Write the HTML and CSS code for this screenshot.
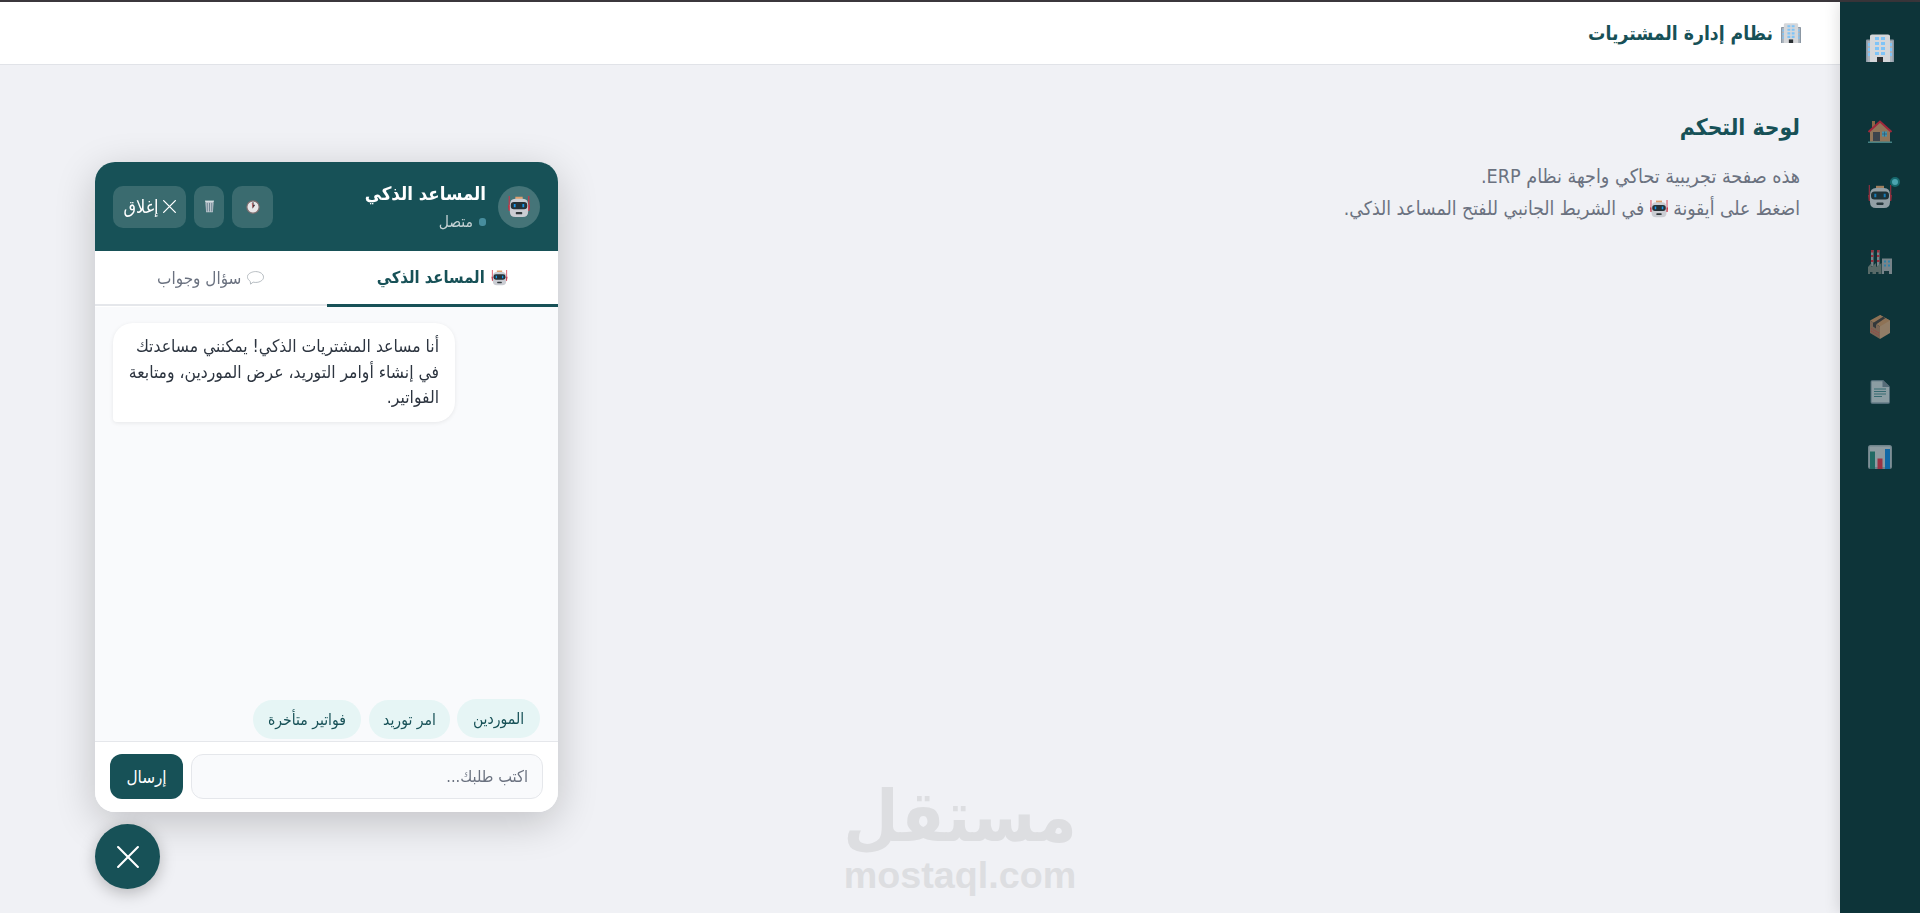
FILE: index.html
```html
<!DOCTYPE html>
<html lang="ar" dir="rtl">
	<head>
		<title>نظام إدارة المشتريات</title>
		<meta charset="utf-8" />
		<link rel="stylesheet" href="styles.css">
	</head>
<body>
	<svg class="sprite" width="0" height="0">
		<symbol id="building" viewBox="0 0 28 28">
			<path fill="#8b97a3" d="M0 28V6.500q0-1 1-1h26q1 0 1 1V28z"/>
			<path fill="#aab3bc" d="M1.500 7h25v21h-25z"/>
			<path fill="#d5d7da" d="M4 28V2q0-1.500 2-1.500h16q2 0 2 1.500v26z"/>
			<path fill="#7fc4f7" d="M9 3h4v3H9zm6 0h4v3h-4zM9 8h4v3H9zm6 0h4v3h-4zM9 13h4v3H9zm6 0h4v3h-4zM9 18h4v3H9zm6 0h4v3h-4zM2 9h2v3H2zm0 5h2v3H2zm0 5h2v3H2zM24 9h2v3h-2zm0 5h2v3h-2zm0 5h2v3h-2z"/>
			<path fill="#2b3033" d="M11 28v-5h6v5z"/>
		</symbol>
		<symbol id="house" viewBox="0 0 24 24">
			<path fill="#c07f50" d="M4 1h3v8H4z"/>
			<path fill="#ca9169" d="M2 11 12 2l10 9v11H2z"/>
			<path fill="none" stroke="#e0243c" stroke-width="2" d="M.5 12 12 1.500 23.500 12"/>
			<path fill="#514b56" d="M5 12h7v9H5z"/>
			<path fill="#53bbe5" d="M14 11.500h5v5h-5z"/>
			<path fill="none" stroke="#456579" stroke-width=".7" d="M16.500 11.500v5M14 14h5"/>
			<path fill="#5da2a4" d="M0 21.500h24V23H0z"/>
		</symbol>
		<symbol id="robot" viewBox="0 0 24 24">
			<path fill="#dfa06f" d="M8 .8h8V4H8z"/>
			<path stroke="#d72d43" stroke-width="1.100" d="M1.300 0v16M22.700 0v16"/>
			<path fill="#c62c3e" d="M0 10h3v6H1zM24 10h-3v6h2z"/>
			<path fill="#cbcdd3" d="M8 3h8q6 0 6 7v7q0 6-6 6H8q-6 0-6-6v-7q0-7 6-7z"/>
			<rect x="3" y="6.500" width="18" height="8" rx="3.500" fill="#263238"/>
			<path fill="#1998ec" d="M6.300 8.800h2v3.500h-2zm9.400 0h2v3.500h-2z"/>
			<rect x="8.500" y="17.500" width="7" height="2.500" rx=".7" fill="#30383c"/>
		</symbol>
		<symbol id="factory" viewBox="0 0 24 24">
			<path fill="#a4a7ad" d="M3 0h2.500v16H3zm6 0h2.500v16H9zM14 8.500h10V24H14z"/>
			<path fill="#d22e40" d="M3 0h2.500v2.500H3zm0 5h2.500v2H3zm0 5h2.500v2H3zM9 0h2.500v2.500H9zm0 5h2.500v2H9zm0 5h2.500v2H9z"/>
			<path fill="#78817d" d="M0 24v-7l3.500-4v4L8 13v4l5.500-4v11z"/>
			<path fill="#3ea4d7" d="M16 10.500h2v2h-2zm4 0h2v2h-2zm-4 4h2v2h-2zm4 0h2v2h-2z"/>
			<path fill="#17383c" d="M2 22h2.500v2H2zm6 0h2.500v2H8zm8-1h5v3h-5z"/>
		</symbol>
		<symbol id="box" viewBox="0 0 24 24">
			<path fill="#ca9d7b" d="M12 0 22 5.500v12.500L12 24z"/>
			<path fill="#c58d62" d="M2 5.500 12 0l10 5.500-10 6z"/>
			<path fill="#a77b61" d="m2 5.500 10 6V24L2 18z"/>
			<path fill="#443b3c" d="m5 8 10-6.300 2.500 1.400L8 9.500v4l-3-2z"/>
			<path stroke="#d94747" stroke-dasharray="1.500 1" d="M3 13.500 11 18M3 16l8 4.500"/>
		</symbol>
		<symbol id="page" viewBox="0 0 24 24">
			<path fill="#6f8494" d="M2.500 2q0-2 2-2H15l7 7v15q0 2-2 2H4.500q-2 0-2-2z"/>
			<path fill="#c1cad0" d="M3.500 1.200h11V7H21v15.500H3.500z"/>
			<path stroke="#48828a" stroke-width="1.200" d="M6 9h12M6 11.500h12M6 14h12M6 16.500h8"/>
			<path fill="#758594" d="M15 0v6.500h7z"/>
		</symbol>
		<symbol id="chart" viewBox="0 0 24 24">
			<rect width="24" height="24" rx="2.500" fill="#9aa6af"/>
			<path fill="#c5c9ce" d="M1.500 1.500h21V22h-21z"/>
			<path fill="#2b8277" d="M2 6.500h5V24H2z"/>
			<path fill="#d83349" d="M9.500 13.500h5V24h-5z"/>
			<path fill="#127fd5" d="M17 4h5v20h-5z"/>
		</symbol>
		<symbol id="clock" viewBox="0 0 16 16">
			<circle cx="8" cy="8" r="7" fill="#e7e6e8" stroke="#816f70" stroke-width="1.400"/>
			<path fill="none" stroke="#3c3337" stroke-width="1.300" d="M8 2.500V8l1.800-2.500"/>
			<path stroke="#d04e51" stroke-width=".8" d="M7 3.500 8 8.500"/>
		</symbol>
		<symbol id="trash" viewBox="0 0 10 14">
			<path fill="#bac5cc" d="M.5 1h9v2L8.800 13.500H1.200L.5 3z"/>
			<path stroke="#eaf0f3" d="M0 1h10"/>
			<path stroke="#4f6b7c" stroke-width=".8" d="M2.500 3v9.500M5 3v9.500M7.500 3v9.500"/>
		</symbol>
		<symbol id="bubble" viewBox="0 0 18 15">
			<path fill="#fff" stroke="#a9b0b6" stroke-width=".9" d="M3.500 11.200C-4 5 4 .7 9 .7s8.500 2.600 8.500 6-5 6.500-11 5.200L3.800 14z"/>
		</symbol>
		<symbol id="cross" viewBox="0 0 20 20">
			<path fill="none" stroke="currentColor" stroke-linecap="round" d="m1 1 18 18M19 1 1 19"/>
		</symbol>
	</svg>

	<div class="topline"></div>
	<div class="app">
		<nav class="sidebar">
			<svg class="logo"><use href="#building"/></svg>
			<a class="item"><svg><use href="#house"/></svg></a>
			<a class="item"><svg><use href="#robot"/></svg><span class="dot"></span></a>
			<a class="item"><svg><use href="#factory"/></svg></a>
			<a class="item"><svg><use href="#box"/></svg></a>
			<a class="item"><svg><use href="#page"/></svg></a>
			<a class="item"><svg><use href="#chart"/></svg></a>
		</nav>
		<main class="main">
			<header class="header">
				<svg><use href="#building"/></svg>
				<h1>نظام إدارة المشتريات</h1>
			</header>
			<section class="content">
				<h2>لوحة التحكم</h2>
				<p class="line1">هذه صفحة تجريبية تحاكي واجهة نظام ERP.</p>
				<p class="line2">اضغط على أيقونة <svg><use href="#robot"/></svg> في الشريط الجانبي للفتح المساعد الذكي.</p>
			</section>
		</main>
	</div>

	<div class="watermark">
		<div class="wm-ar">مستقل</div>
		<div class="wm-en">mostaql.com</div>
	</div>

	<div class="chat">
		<div class="chat-header">
			<div class="avatar"><svg><use href="#robot"/></svg></div>
			<div class="who">
				<div class="name">المساعد الذكي</div>
				<div class="status"><span></span>متصل</div>
			</div>
			<div class="actions">
				<button class="b-clock"><svg><use href="#clock"/></svg></button>
				<button class="b-trash"><svg><use href="#trash"/></svg></button>
				<button class="b-close"><svg><use href="#cross"/></svg>إغلاق</button>
			</div>
		</div>
		<div class="tabs">
			<div class="tab active"><svg><use href="#robot"/></svg>المساعد الذكي</div>
			<div class="tab"><svg><use href="#bubble"/></svg>سؤال وجواب</div>
		</div>
		<div class="messages">
			<div class="msg">أنا مساعد المشتريات الذكي! يمكنني مساعدتك<br>في إنشاء أوامر التوريد، عرض الموردين، ومتابعة<br>الفواتير.</div>
		</div>
		<div class="chips">
			<button class="chip first">الموردين</button>
			<button class="chip second">امر توريد</button>
			<button class="chip third">فواتير متأخرة</button>
		</div>
		<div class="composer">
			<input type="text" placeholder="اكتب طلبك...">
			<button class="send">إرسال</button>
		</div>
	</div>
	<button class="fab"><svg><use href="#cross"/></svg></button>
</body>
</html>
```

FILE: styles.css
```css
:root {
	--teal: #175157;
	--dark: #0d3439;
	--grey: #6b7280;
	font-family: "DejaVu Sans Condensed", "DejaVu Sans", sans-serif;
}
* {
	box-sizing: border-box;
}
body {
	margin: 0;
	height: 100vh;
	overflow: hidden;
	background-color: #f0f1f5;
}
button, input {
	font-family: inherit;
	border: none;
}
h1, h2, p {
	margin: 0;
	white-space: nowrap;
}
svg {
	display: block;
	flex: none;
}
.sprite {
	position: absolute;
}
.topline {
	height: 2px;
	background-color: #3b373c;
}
.app {
	display: flex;
	height: calc(100vh - 2px);
}
/* sidebar */
.sidebar {
	width: 80px;
	background-color: var(--dark);
	box-shadow: -2px 0 14px rgba(0,0,0,.12);
	display: flex;
	flex-direction: column;
	align-items: center;
	padding-top: 32px;
	z-index: 1;
}
.logo {
	width: 28px;
	height: 28px;
	margin-bottom: 45px;
}
.item {
	position: relative;
	width: 50px;
	height: 50px;
	margin-bottom: 15px;
	display: flex;
	align-items: center;
	justify-content: center;
}
.item svg {
	width: 24px;
	height: 24px;
	opacity: .7;
}
.dot {
	position: absolute;
	top: 5px;
	right: 5px;
	width: 10px;
	height: 10px;
	border-radius: 50%;
	background-color: #4ba4b0;
	border: 2px solid #17686d;
}
/* page */
.main {
	flex: 1;
}
.header {
	height: 63px;
	background-color: #fff;
	border-bottom: 1px solid #e1e3e8;
	display: flex;
	align-items: center;
	gap: 8px;
	padding: 0 39px;
}
.header svg {
	width: 20px;
	height: 20px;
}
.header h1 {
	font-size: 19.200px;
	color: var(--teal);
}
.content {
	padding: 40px 40px;
	color: var(--grey);
}
.content h2 {
	font-size: 22.700px;
	line-height: 44px;
	color: var(--teal);
	margin-bottom: 12px;
}
.content p {
	font-size: 19.200px;
	line-height: 32px;
	height: 32px;
}
.content .line1 {
	font-size: 19.600px;
}
.content p svg {
	display: inline-block;
	width: 18px;
	height: 18px;
	vertical-align: -3px;
}
/* watermark */
.watermark {
	position: absolute;
	left: 845px;
	top: 780px;
	width: 230px;
	color: #dddee1;
	display: flex;
	flex-direction: column;
	align-items: center;
	direction: ltr;
	font-weight: bold;
}
.wm-ar {
	font-size: 71px;
	line-height: 73px;
	height: 73px;
	white-space: nowrap;
}
.wm-en {
	font-family: "Liberation Sans", sans-serif;
	font-size: 37.700px;
	line-height: 44px;
}
/* chat window */
.chat {
	position: fixed;
	left: 95px;
	top: 162px;
	width: 463px;
	height: 650px;
	border-radius: 20px;
	overflow: hidden;
	background-color: #f9fafc;
	box-shadow: 0 10px 40px rgba(0,0,0,.2);
	display: flex;
	flex-direction: column;
}
.chat-header {
	height: 89px;
	background-color: var(--teal);
	color: #fff;
	display: flex;
	align-items: center;
	padding: 0 18px;
	gap: 12px;
}
.avatar {
	width: 42px;
	height: 42px;
	border-radius: 50%;
	background-color: #457478;
	display: flex;
	align-items: center;
	justify-content: center;
}
.avatar svg {
	width: 22px;
	height: 22px;
}
.name {
	font-size: 18.500px;
	font-weight: bold;
	line-height: 30px;
	white-space: nowrap;
}
.status {
	display: flex;
	align-items: center;
	gap: 6px;
	font-size: 15.500px;
	line-height: 26px;
	color: #c5d2d4;
}
.status span {
	width: 7px;
	height: 8px;
	border-radius: 3px;
	background-color: #478d9d;
}
.actions {
	display: flex;
	gap: 8px;
	margin-right: auto;
}
.actions button {
	height: 42px;
	border-radius: 10px;
	background-color: #3a6b6f;
	color: #fff;
	display: flex;
	align-items: center;
	justify-content: center;
	padding: 0;
	gap: 4px;
	font-size: 18px;
}
.b-clock {
	width: 41px;
}
.b-clock svg {
	width: 14px;
	height: 14px;
}
.b-trash {
	width: 30px;
}
.b-trash svg {
	width: 9px;
	height: 13px;
}
.b-close {
	width: 73px;
}
.b-close svg {
	width: 13px;
	height: 13px;
	stroke-width: 2;
}
.tabs {
	height: 56px;
	display: flex;
	background-color: #fff;
}
.tab {
	flex: 1;
	height: 55px;
	border-bottom: 2px solid #e5e7eb;
	display: flex;
	align-items: center;
	justify-content: center;
	gap: 6px;
	font-size: 17px;
	color: var(--grey);
	white-space: nowrap;
}
.tab svg {
	width: 17px;
	height: 16px;
}
.tab.active {
	height: 56px;
	border-bottom: 3px solid var(--teal);
	color: var(--teal);
	font-size: 16.500px;
	font-weight: bold;
}
.messages {
	flex: 1;
	padding: 16px 18px;
	display: flex;
	justify-content: flex-end;
	align-items: flex-start;
}
.msg {
	width: 342px;
	height: 99px;
	padding: 11px 16px;
	border-radius: 20px 20px 20px 4px;
	background-color: #fff;
	box-shadow: 0 1px 4px rgba(0,0,0,.08);
	color: #2d3540;
	font-size: 17.400px;
	line-height: 25.600px;
	white-space: nowrap;
}
.chips {
	display: flex;
	padding: 0 18px 2px;
}
.chip {
	height: 39px;
	border-radius: 20px;
	background-color: #e6f5f5;
	color: var(--teal);
	font-size: 15.600px;
	padding: 0;
	white-space: nowrap;
}
.first {
	width: 83px;
	margin-left: 7px;
}
.second {
	width: 81px;
	margin: 1px 0 0 8px;
}
.third {
	width: 108px;
	margin-top: 1px;
}
.composer {
	height: 71px;
	border-top: 1px solid #e5e7eb;
	background-color: #fff;
	display: flex;
	gap: 8px;
	padding: 12px 15px;
}
.composer input {
	flex: 1;
	min-width: 0;
	height: 45px;
	border: 1px solid #e5e7eb;
	border-radius: 12px;
	background-color: #f9fafc;
	padding: 0 14px;
	font-size: 16.300px;
}
.composer input::placeholder {
	color: var(--grey);
}
.send {
	width: 73px;
	height: 45px;
	border-radius: 12px;
	background-color: var(--teal);
	color: #fff;
	font-size: 17px;
}
.fab {
	position: fixed;
	left: 95px;
	top: 824px;
	width: 65px;
	height: 65px;
	border-radius: 50%;
	background-color: var(--teal);
	color: #fff;
	box-shadow: 0 4px 16px rgba(0,0,0,.25);
	display: flex;
	align-items: center;
	justify-content: center;
	padding: 0;
}
.fab svg {
	width: 22px;
	height: 22px;
	stroke-width: 1.900;
}
```
